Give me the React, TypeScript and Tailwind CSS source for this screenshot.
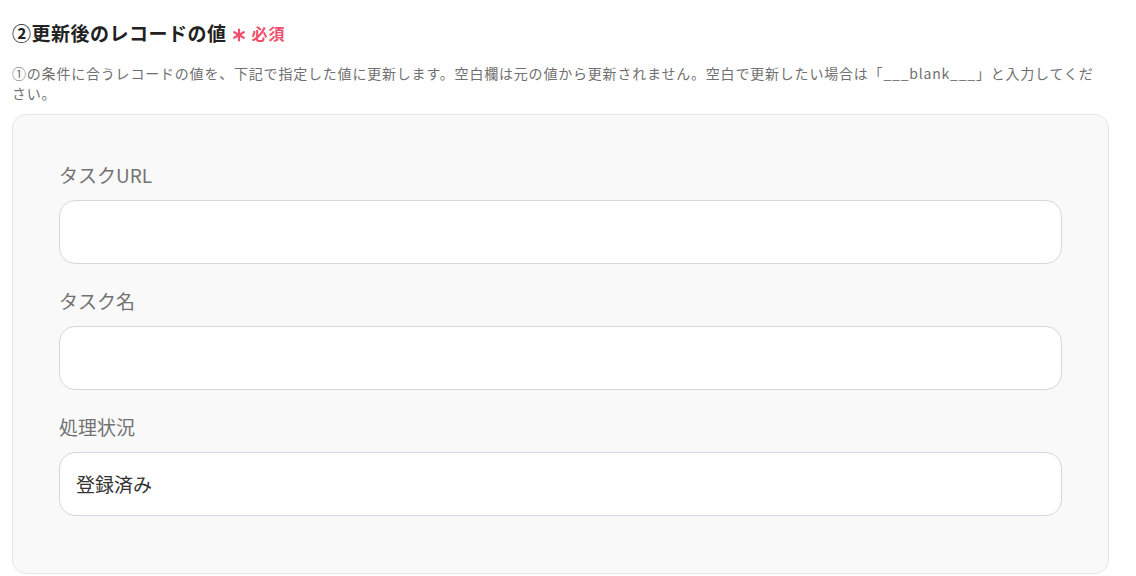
const fields = [
  { label: "タスクURL", value: "" },
  { label: "タスク名", value: "" },
  { label: "処理状況", value: "登録済み" },
];

function Asterisk() {
  return (
    <svg width="14" height="14" viewBox="0 0 14 14" className="text-[#f0506e]">
      <g stroke="currentColor" strokeWidth="2.2" strokeLinecap="round">
        <line x1="7" y1="1.5" x2="7" y2="12.5" />
        <line x1="2.2" y1="4.2" x2="11.8" y2="9.8" />
        <line x1="2.2" y1="9.8" x2="11.8" y2="4.2" />
      </g>
    </svg>
  );
}

export default function App() {
  return (
    <div
      className="min-h-screen bg-white px-3 pt-[21px] text-[#222]"
      style={{ fontFamily: '"Noto Sans CJK JP", "Noto Sans", sans-serif' }}
    >
      <div className="flex items-center h-6">
        <h2 className="text-[19px] font-bold leading-6 tracking-[0.5px]">②更新後のレコードの値</h2>
        <span className="ml-[5px] mt-[3px]">
          <Asterisk />
        </span>
        <span className="ml-[6px] text-[16px] font-bold leading-6 tracking-[1px] text-[#f0506e]">必須</span>
      </div>
      <p className="mt-[18px] pr-[24px] text-[14px] leading-5 tracking-[0.8px] text-[#707070]">
        ①の条件に合うレコードの値を、下記で指定した値に更新します。空白欄は元の値から更新されません。空白で更新したい場合は「___blank___」と入力してください。
      </p>
      <div className="mt-[11px] mr-[15px] rounded-[14px] border border-[#e6e6e6] bg-[#f9f9f9] px-[46px] pt-[47px] pb-[57px]">
        <div className="flex flex-col gap-[24px]">
          {fields.map((f) => (
            <div key={f.label}>
              <div className="text-[19px] leading-[26px] text-[#737373]">{f.label}</div>
              <div className="mt-3 flex h-16 items-center rounded-2xl border border-[#d4d8de] bg-white px-4 text-[19px] text-[#333]">
                {f.value}
              </div>
            </div>
          ))}
        </div>
      </div>
    </div>
  );
}
